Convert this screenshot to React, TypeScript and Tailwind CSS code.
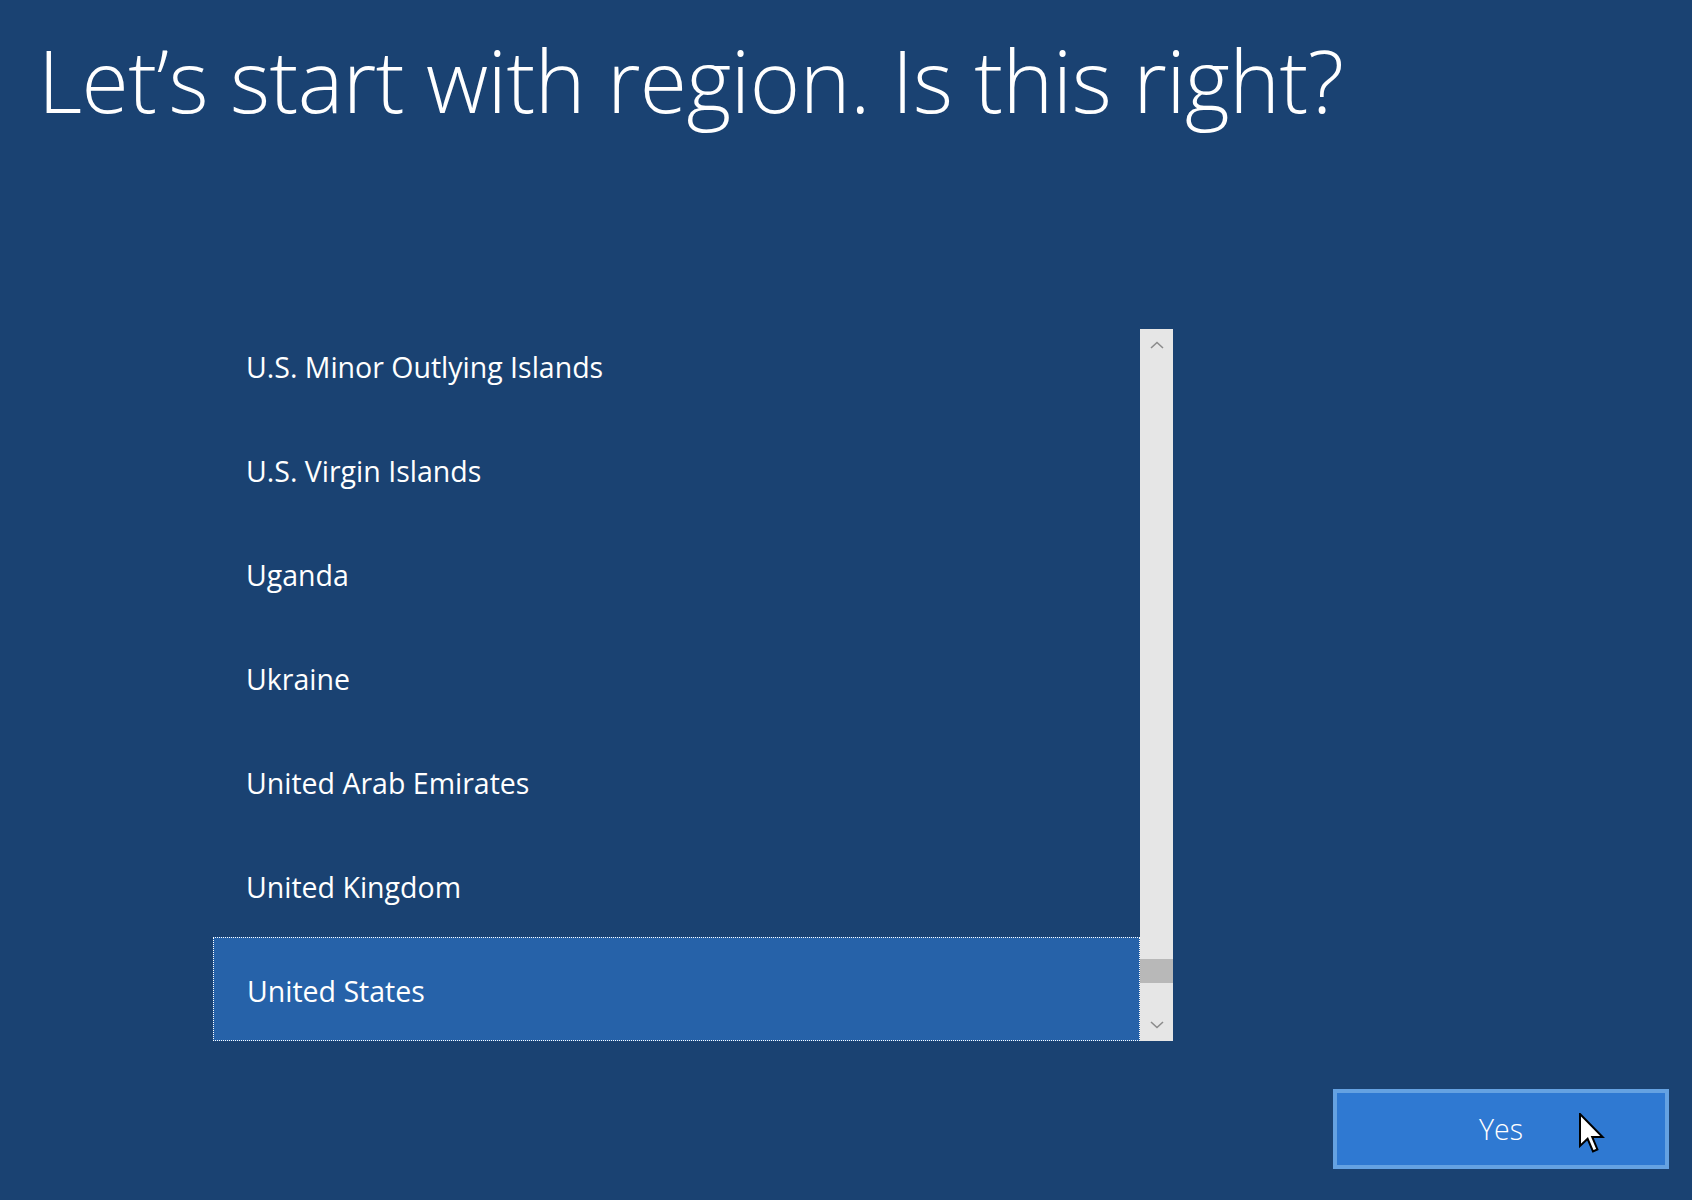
import React from "react";

const REGIONS = [
  "U.S. Minor Outlying Islands",
  "U.S. Virgin Islands",
  "Uganda",
  "Ukraine",
  "United Arab Emirates",
  "United Kingdom",
  "United States",
];

const SELECTED = "United States";

function Chevron({ up }: { up: boolean }) {
  return (
    <svg width="14" height="8" viewBox="0 0 14 8" className="block">
      <path
        d={up ? "M1 7 L7 1.5 L13 7" : "M1 1 L7 6.5 L13 1"}
        fill="none"
        stroke="#8c8c8c"
        strokeWidth="1.6"
      />
    </svg>
  );
}

function Cursor() {
  return (
    <svg width="26" height="40" viewBox="0 0 13 20" className="block">
      <path
        d="M0.5 0.5 L0.5 16.5 L4.3 12.9 L7 19.2 L9.2 18.2 L6.6 12 L11.8 12 Z"
        fill="#ffffff"
        stroke="#000000"
        strokeWidth="1"
        strokeLinejoin="miter"
      />
    </svg>
  );
}

export default function App() {
  return (
    <div
      className="w-full h-[1200px] bg-[#1a4272] flex flex-col overflow-hidden text-white"
      style={{ fontFamily: '"Segoe UI", "Open Sans", "Noto Sans", sans-serif' }}
    >
      <h1 className="pl-[38px] pt-[37px] text-[86px] leading-none font-light tracking-[-0.5px]">
        Let’s start with region. Is this right?
      </h1>

      <div className="ml-[213px] mt-[206px] flex h-[712px]">
        <div className="w-[927px] h-full overflow-hidden">
          <ul className="-mt-[16px]">
            {REGIONS.map((r) => {
              const sel = r === SELECTED;
              return (
                <li
                  key={r}
                  className={`h-[104px] flex items-center pl-[33px] pt-[4px] text-[28.5px] ${
                    sel
                      ? "bg-[#2662a9] border border-dotted border-white pl-[32px]"
                      : ""
                  }`}
                >
                  {r}
                </li>
              );
            })}
          </ul>
        </div>
        <div className="w-[33px] h-full bg-[#e6e6e6] flex flex-col items-center">
          <div className="h-[30px] flex items-center justify-center pt-[2px]">
            <Chevron up />
          </div>
          <div className="flex-1 w-full flex flex-col justify-end">
            <div className="h-[24px] w-full bg-[#b8b8b8]" />
            <div className="h-[34px]" />
          </div>
          <div className="h-[24px] flex items-start justify-center pt-[4px]">
            <Chevron up={false} />
          </div>
        </div>
      </div>

      <div className="flex justify-end pr-[23px] mt-[48px]">
        <div className="relative">
          <button
            type="button"
            className="w-[336px] h-[80px] bg-[#2f79d2] border-4 border-[#65a2e2] text-[28.5px] font-light text-white flex items-center justify-center"
          >
            Yes
          </button>
          <div className="absolute left-[246px] top-[24px]">
            <Cursor />
          </div>
        </div>
      </div>
    </div>
  );
}
